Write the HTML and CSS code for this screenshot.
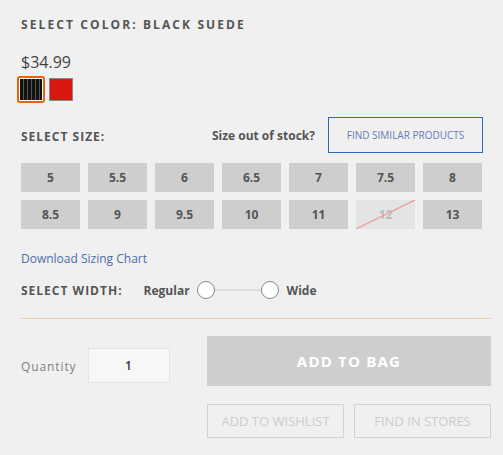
FILE: index.html
```html
<!DOCTYPE html>
<html>
<head>
<meta charset="utf-8">
<link rel="stylesheet" href="styles.css">
</head>
<body>
<div class="page">
  <div class="heading color-heading">SELECT COLOR: BLACK SUEDE</div>
  <div class="price">$34.99</div>
  <div class="swatches">
    <div class="swatch swatch-black selected"><div class="stripes"></div></div>
    <div class="swatch swatch-red"></div>
  </div>
  <div class="size-head">
    <div class="heading size-title">SELECT SIZE:</div>
    <div class="oos">
      <span class="oos-text">Size out of stock?</span>
      <button class="similar">FIND SIMILAR PRODUCTS</button>
    </div>
  </div>
  <div class="sizes">
    <div class="size">5</div>
    <div class="size">5.5</div>
    <div class="size">6</div>
    <div class="size">6.5</div>
    <div class="size">7</div>
    <div class="size">7.5</div>
    <div class="size">8</div>
    <div class="size">8.5</div>
    <div class="size">9</div>
    <div class="size">9.5</div>
    <div class="size">10</div>
    <div class="size">11</div>
    <div class="size disabled">12<svg class="strike" viewBox="0 0 59 29" preserveAspectRatio="none"><line x1="0" y1="29" x2="59" y2="0" stroke="#f29a9a" stroke-width="1.3"/></svg></div>
    <div class="size">13</div>
  </div>
  <a class="chart">Download Sizing Chart</a>
  <div class="width-row">
    <div class="heading">SELECT WIDTH:</div>
    <span class="wlabel regular">Regular</span>
    <span class="radio"></span>
    <span class="track"></span>
    <span class="radio"></span>
    <span class="wlabel wide">Wide</span>
  </div>
  <div class="divider"></div>
  <div class="buy">
    <div class="qty">
      <span class="qty-label">Quantity</span>
      <div class="qty-input">1</div>
    </div>
    <div class="actions">
      <button class="bag">ADD TO BAG</button>
      <div class="secondary">
        <button class="sec">ADD TO WISHLIST</button>
        <button class="sec">FIND IN STORES</button>
      </div>
    </div>
  </div>
</div>
</body>
</html>
```

FILE: styles.css
```css
* { box-sizing: border-box; }
html, body { margin: 0; padding: 0; background: #f0f0f0; }
body { font-family: "Open Sans", "Noto Sans", sans-serif; color: #555; }
.page { padding: 16px 12px 0 21px; width: 503px; }
.heading {
  font-size: 12px; font-weight: 700; letter-spacing: 1px; color: #555;
  line-height: 17px;
}
.color-heading { letter-spacing: 2.1px; }
.price { margin-top: 19px; font-size: 16px; color: #444; line-height: 20px; }
.swatches { display: flex; align-items: center; gap: 4px; margin-top: 4px; margin-left: -4px; }
.swatch { width: 24px; height: 24px; }
.swatch-black {
  width: 28px; height: 27px; border: 2px solid #e8630f; border-radius: 3px;
  padding: 1px; background: #fff;
}
.stripes {
  width: 100%; height: 100%;
  background: repeating-linear-gradient(90deg, #111 0, #111 3px, #555 3px, #555 4px);
}
.swatch-red { background: #d8180f; border: 1px solid #8a8a8a; height: 23px; }
.size-head {
  display: flex; align-items: center; justify-content: space-between;
  margin-top: 14px; width: 461px;
}
.size-title { padding-top: 3px; }
.oos { display: flex; align-items: center; gap: 13px; }
.oos-text { font-size: 12px; font-weight: 700; color: #555; }
.similar {
  width: 155px; height: 36px; border: 1.5px solid #2a6cb8; background: transparent;
  font-family: inherit; font-size: 10px; color: #6a78b8; padding: 0; margin-right: -1px;
}
.sizes {
  display: grid; grid-template-columns: repeat(7, 59px); gap: 8px;
  margin-top: 10px;
}
.size {
  height: 29px; background: #cecece; display: flex; align-items: center; justify-content: center;
  font-size: 12px; font-weight: 700; color: #555; position: relative;
}
.size.disabled { background: #e4e4e4; color: #bbb; }
.strike { position: absolute; left: 0; top: 0; width: 100%; height: 100%; }
.chart { display: block; margin-top: 21px; font-size: 12px; color: #4a6db0; line-height: 17px; }
.width-row { display: flex; align-items: center; margin-top: 14px; }
.wlabel { font-size: 12px; font-weight: 700; color: #555; }
.regular { margin-left: 21px; margin-right: 7px; }
.radio {
  width: 18px; height: 18px; border-radius: 50%; border: 1px solid #888; background: #fff;
}
.track { width: 46px; height: 2px; background: #ddd; }
.wide { margin-left: 8px; }
.divider { height: 1px; background: #f5cda8; margin-top: 19px; width: 470px; }
.buy { display: flex; margin-top: 17px; }
.qty { display: flex; align-items: center; height: 50px; gap: 11px; width: 186px; padding-top: 9px; }
.qty-label { font-size: 12px; color: #857f7a; letter-spacing: 0.9px; padding-top: 1px; }
.qty-input {
  width: 82px; height: 35px; background: #f7f7f7; border: 1px solid #e4e4e4;
  display: flex; align-items: center; justify-content: center; font-size: 12px; font-weight: 600; color: #333;
}
.actions { width: 284px; }
.bag {
  width: 284px; height: 50px; border: 0; background: #cecece; color: #fff;
  font-family: inherit; font-size: 15px; font-weight: 700; letter-spacing: 1.2px; padding: 0;
}
.secondary { display: flex; justify-content: space-between; margin-top: 18px; }
.sec {
  width: 137px; height: 34px; border: 1px solid #d3d3d3; background: transparent;
  font-family: inherit; font-size: 13px; color: #ccc; padding: 0;
}
```
